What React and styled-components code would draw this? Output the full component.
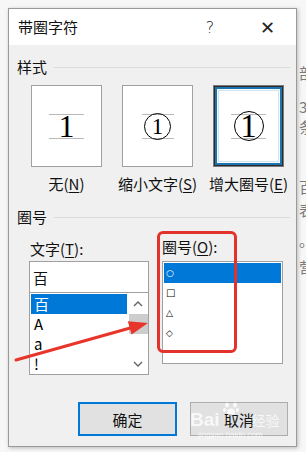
import React from "react";
import styled, { createGlobalStyle } from "styled-components";

const Global = createGlobalStyle`
  html, body { margin: 0; padding: 0; background: #f7f7f7; }
  body { font-family: "Noto Sans CJK SC", "Noto Sans", sans-serif; }
`;

const Page = styled.div`
  position: relative;
  width: 306px;
  height: 452px;
  overflow: hidden;
  display: flex;
  align-items: flex-start;
`;

const Dialog = styled.div`
  margin: 8px 0 0 8px;
  width: 289px;
  height: 439px;
  box-sizing: border-box;
  border: 1px solid #9a9a9a;
  background: #f0f0f0;
  box-shadow: 1px 1px 4px rgba(0,0,0,0.25);
  display: flex;
  flex-direction: column;
  flex-shrink: 0;
  font-size: 15px;
  color: #111;
`;

const TitleBar = styled.div`
  height: 36px;
  background: #fff;
  display: flex;
  align-items: center;
  padding: 0 6px 0 9px;
  flex-shrink: 0;
`;

const Title = styled.div`
  flex: 1;
  font-size: 15px;
  line-height: 20px;
`;

const TitleBtn = styled.div`
  width: ${p => p.$w}px;
  margin-right: ${p => p.$mr || 0}px;
  text-align: center;
  font-size: ${p => p.$size}px;
  font-family: "DejaVu Sans", sans-serif;
  font-weight: 300;
  color: #222;
`;

const Body = styled.div`
  flex: 1;
  display: flex;
  flex-direction: column;
  padding: 0 6px 0 8px;
`;

const GroupHeader = styled.div`
  display: flex;
  align-items: center;
  height: 20px;
  line-height: 20px;
  margin-top: ${p => p.$mt}px;
  &::after {
    content: "";
    flex: 1;
    height: 1px;
    background: #dcdcdc;
    margin-left: 7px;
  }
`;

const StyleRow = styled.div`
  display: flex;
  gap: 20px;
  margin: 8px 0 0 14px;
`;

const StyleOption = styled.div`
  width: 71px;
  display: flex;
  flex-direction: column;
  align-items: center;
`;

const PreviewBox = styled.div`
  width: 71px;
  height: 82px;
  box-sizing: border-box;
  background: #fff;
  border: 1px solid ${p => (p.$selected ? "#7a7a7a" : "#a0a0a0")};
  box-shadow: ${p =>
    p.$selected
      ? "inset 0 0 0 1px #2b2b2b, inset 0 0 0 3px #1d73ae, inset 0 0 0 4px #f4fafd, inset 0 0 0 5px #cfe6f5"
      : "none"};
  display: flex;
  align-items: center;
  justify-content: center;
`;

const Guide = styled.div`
  width: ${p => p.$w}px;
  height: 23px;
  border-top: 1px solid #b9b9b9;
  border-bottom: 1px solid #b9b9b9;
  display: flex;
  align-items: center;
  justify-content: center;
`;

const Digit = styled.span`
  font-family: "Liberation Serif", serif;
  font-size: ${p => p.$size}px;
  line-height: 1;
  color: #000;
  display: block;
`;

const Ring = styled.span`
  width: ${p => p.$d}px;
  height: ${p => p.$d}px;
  flex-shrink: 0;
  border: 1px solid #000;
  border-radius: 50%;
  display: flex;
  align-items: center;
  justify-content: center;
  box-sizing: border-box;
  background: transparent;
`;

const OptionLabel = styled.div`
  margin-top: 7px;
  line-height: 20px;
  white-space: nowrap;
`;

const U = styled.span`
  text-decoration: underline;
  text-underline-offset: 2px;
`;

const Columns = styled.div`
  display: flex;
  gap: 13px;
  margin: 12px 0 0 12px;
`;

const Column = styled.div`
  display: flex;
  flex-direction: column;
  width: ${p => p.$w}px;
`;

const FieldLabel = styled.div`
  line-height: 20px;
  margin: ${p => p.$m};
`;

const TextInput = styled.div`
  margin-top: 2px;
  height: 31px;
  box-sizing: border-box;
  background: #fff;
  border: 1px solid #a0a0a0;
  border-bottom: none;
  display: flex;
  align-items: center;
  padding-left: 3px;
`;

const ListBox = styled.div`
  height: ${p => p.$h}px;
  box-sizing: border-box;
  background: #fff;
  border: 1px solid #a0a0a0;
  display: flex;
  margin-top: ${p => p.$mt}px;
`;

const ListItems = styled.div`
  flex: 1;
  padding: 1px 1px 0 1px;
  display: flex;
  flex-direction: column;
`;

const ListItem = styled.div`
  height: 20px;
  line-height: 20px;
  padding-left: ${p => p.$pl}px;
  background: ${p => (p.$selected ? "#0078d7" : "transparent")};
  color: ${p => (p.$selected ? "#fff" : "#000")};
  font-size: ${p => p.$size || 15}px;
  font-family: ${p => (p.$symbol ? '"DejaVu Sans", sans-serif' : 'inherit')};
  display: flex;
  align-items: center;
`;

const ScrollBar = styled.div`
  width: 20px;
  display: flex;
  flex-direction: column;
  align-items: center;
  background: #fff;
`;

const ScrollArrow = styled.div`
  height: 21px;
  width: 20px;
  display: flex;
  align-items: center;
  justify-content: center;
`;

const ScrollThumb = styled.div`
  width: 19px;
  height: 20px;
  background: #cdcdcd;
`;

const ScrollTrack = styled.div`
  flex: 1;
`;

const ButtonRow = styled.div`
  display: flex;
  justify-content: flex-end;
  gap: 13px;
  margin-top: auto;
  margin-bottom: 10px;
  padding-right: 2px;
`;

const Button = styled.div`
  width: ${p => p.$w}px;
  height: 34px;
  box-sizing: border-box;
  background: #e1e1e1;
  border: ${p => (p.$default ? "2px solid #0078d7" : "1px solid #adadad")};
  display: flex;
  align-items: center;
  justify-content: center;
  color: #111;
`;

const DocColumn = styled.div`
  display: flex;
  flex-direction: column;
  margin-left: 2px;
  color: #7a7a7a;
  font-size: 15px;
  line-height: 20px;
`;

const DocChar = styled.div`
  margin-top: ${p => p.$mt}px;
  white-space: nowrap;
`;

const Annotation = styled.div`
  position: absolute;
  left: 157px;
  top: 231px;
  width: 80px;
  height: 122px;
  box-sizing: border-box;
  border: 3px solid #e2322c;
  border-radius: 6px;
  pointer-events: none;
`;

const ArrowSvg = styled.svg`
  position: absolute;
  left: 0;
  top: 0;
  pointer-events: none;
`;

const Watermark = styled.div`
  position: absolute;
  left: 190px;
  top: 400px;
  width: 100px;
  height: 44px;
  pointer-events: none;
  color: rgba(255, 255, 255, 0.78);
  display: flex;
  flex-direction: column;
  align-items: flex-start;
`;

const WmMain = styled.div`
  display: flex;
  align-items: center;
  gap: 2px;
  margin-top: 10px;
`;

const WmBai = styled.span`
  font-family: "Liberation Sans", sans-serif;
  font-weight: bold;
  font-size: 19px;
  line-height: 20px;
`;

const WmJy = styled.span`
  font-size: 14px;
  line-height: 20px;
  margin-left: 30px;
`;

const WmUrl = styled.span`
  font-family: "Liberation Sans", sans-serif;
  font-size: 8px;
  line-height: 10px;
  margin-left: 8px;
`;

const Paw = styled.svg`
  position: absolute;
  left: 33px;
  top: 1px;
`;

const Chevron = ({ up }) => (
  <svg width="10" height="6" viewBox="0 0 10 6">
    <polyline
      points={up ? "1,5 5,1 9,5" : "1,1 5,5 9,1"}
      fill="none"
      stroke="#606060"
      strokeWidth="1.3"
    />
  </svg>
);

export default function App() {
  return (
    <Page>
      <Global />
      <Dialog>
        <TitleBar>
          <Title>带圈字符</Title>
          <TitleBtn $w={20} $size={16} $mr={24}>?</TitleBtn>
          <TitleBtn $w={46} $size={18}>✕</TitleBtn>
        </TitleBar>
        <Body>
          <GroupHeader $mt={12}>样式</GroupHeader>
          <StyleRow>
            <StyleOption>
              <PreviewBox>
                <Guide $w={35}>
                  <Digit $size={32}>1</Digit>
                </Guide>
              </PreviewBox>
              <OptionLabel>
                无(<U>N</U>)
              </OptionLabel>
            </StyleOption>
            <StyleOption>
              <PreviewBox>
                <Guide $w={32}>
                  <Ring $d={27}>
                    <Digit $size={23}>1</Digit>
                  </Ring>
                </Guide>
              </PreviewBox>
              <OptionLabel>
                缩小文字(<U>S</U>)
              </OptionLabel>
            </StyleOption>
            <StyleOption>
              <PreviewBox $selected>
                <Guide $w={35}>
                  <Ring $d={30}>
                    <Digit $size={33}>1</Digit>
                  </Ring>
                </Guide>
              </PreviewBox>
              <OptionLabel>
                增大圈号(<U>E</U>)
              </OptionLabel>
            </StyleOption>
          </StyleRow>
          <GroupHeader $mt={13}>圈号</GroupHeader>
          <Columns>
            <Column $w={120}>
              <FieldLabel $m="0 0 0 1px">
                文字(<U>T</U>):
              </FieldLabel>
              <TextInput>百</TextInput>
              <ListBox $h={83} $mt={0}>
                <ListItems>
                  <ListItem $selected $pl={3}>百</ListItem>
                  <ListItem $pl={3}>A</ListItem>
                  <ListItem $pl={3}>a</ListItem>
                  <ListItem $pl={3}>!</ListItem>
                </ListItems>
                <ScrollBar>
                  <ScrollArrow>
                    <Chevron up />
                  </ScrollArrow>
                  <ScrollThumb />
                  <ScrollTrack />
                  <ScrollArrow>
                    <Chevron />
                  </ScrollArrow>
                </ScrollBar>
              </ListBox>
            </Column>
            <Column $w={121}>
              <FieldLabel $m="-2px 0 0 0">
                圈号(<U>O</U>):
              </FieldLabel>
              <ListBox $h={103} $mt={4}>
                <ListItems>
                  <ListItem $selected $symbol $size={9} $pl={2}>○</ListItem>
                  <ListItem $symbol $size={10} $pl={2}>□</ListItem>
                  <ListItem $symbol $size={9} $pl={2}>△</ListItem>
                  <ListItem $symbol $size={9} $pl={2}>◇</ListItem>
                </ListItems>
              </ListBox>
            </Column>
          </Columns>
          <ButtonRow>
            <Button $w={99} $default>确定</Button>
            <Button $w={98}>取消</Button>
          </ButtonRow>
        </Body>
      </Dialog>
      <DocColumn>
        <DocChar $mt={63}>部</DocChar>
        <DocChar $mt={14}>3</DocChar>
        <DocChar $mt={0}>条</DocChar>
        <DocChar $mt={40}>百</DocChar>
        <DocChar $mt={3}>表</DocChar>
        <DocChar $mt={10}>。</DocChar>
        <DocChar $mt={7}>营</DocChar>
      </DocColumn>

      <Annotation />
      <ArrowSvg width="306" height="452" viewBox="0 0 306 452">
        <line x1="16" y1="360" x2="132" y2="327.5" stroke="#e8352c" strokeWidth="3" strokeLinecap="round" />
        <polygon points="148,323 131.6,334.6 127.8,321.2" fill="#e8352c" />
      </ArrowSvg>
      <Watermark>
        <Paw width="16" height="16" viewBox="0 0 16 16">
          <g fill="rgba(255,255,255,0.8)">
            <ellipse cx="4" cy="4" rx="2" ry="2.5" />
            <ellipse cx="12" cy="4" rx="2" ry="2.5" />
            <ellipse cx="1.5" cy="9" rx="1.5" ry="2" />
            <ellipse cx="14.5" cy="9" rx="1.5" ry="2" />
            <ellipse cx="8" cy="11" rx="4" ry="3.5" />
          </g>
        </Paw>
        <WmMain>
          <WmBai>Bai</WmBai>
          <WmJy>经验</WmJy>
        </WmMain>
        <WmUrl>jingyan.baidu.com</WmUrl>
      </Watermark>
    </Page>
  );
}
